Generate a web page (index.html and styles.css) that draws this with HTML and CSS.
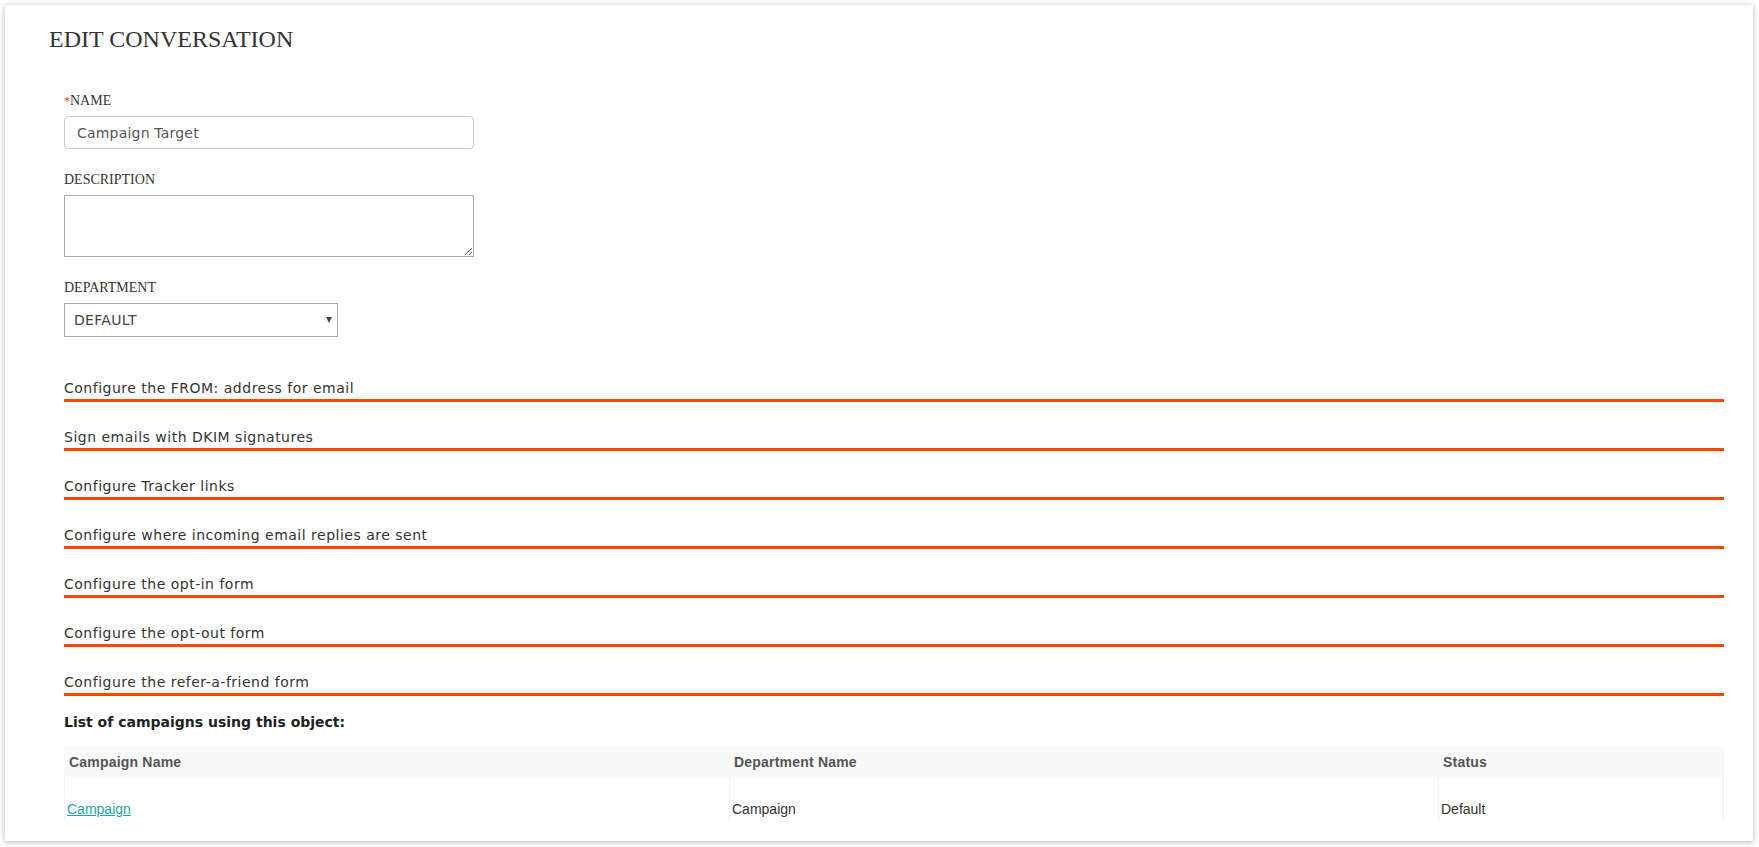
FILE: index.html
```html
<!DOCTYPE html>
<html lang="en">
<head>
    <meta charset="UTF-8">
    <meta name="viewport" content="width=device-width, initial-scale=1.0">
    <link rel="stylesheet" href="styles.css">
    <title>Edit conversation</title>
</head>
<body>
    <div class="card">

        <h1 class="title">EDIT CONVERSATION</h1>

        <div class="form">
            <div class="field">
                <label class="label" for="name"><span class="req">*</span>NAME</label>
                <input class="input" id="name" type="text" value="Campaign Target">
            </div>

            <div class="field">
                <label class="label" for="desc">DESCRIPTION</label>
                <textarea class="area" id="desc"></textarea>
            </div>

            <div class="field field-last">
                <label class="label" for="dept">DEPARTMENT</label>
                <div class="select-wrap">
                    <select class="select" id="dept">
                        <option>DEFAULT</option>
                    </select>
                </div>
            </div>

            <div class="sections">
                <div class="section">Configure the FROM: address for email</div>
                <div class="section">Sign emails with DKIM signatures</div>
                <div class="section">Configure Tracker links</div>
                <div class="section">Configure where incoming email replies are sent</div>
                <div class="section">Configure the opt-in form</div>
                <div class="section">Configure the opt-out form</div>
                <div class="section">Configure the refer-a-friend form</div>
            </div>

            <h3 class="list-title">List of campaigns using this object:</h3>

            <table class="campaigns">
                <colgroup>
                    <col class="c1">
                    <col class="c2">
                    <col class="c3">
                </colgroup>
                <thead>
                    <tr>
                        <th>Campaign Name</th>
                        <th>Department Name</th>
                        <th>Status</th>
                    </tr>
                </thead>
                <tbody>
                    <tr>
                        <td><a href="#">Campaign</a></td>
                        <td>Campaign</td>
                        <td>Default</td>
                    </tr>
                </tbody>
            </table>
        </div>
    </div>
</body>
</html>
```

FILE: styles.css
```css
*{
    margin:0;
    padding:0;
    box-sizing:border-box;
}
body{
    width:1759px;
    height:847px;
    overflow:hidden;
    background:#fff;
}
.card{
    margin:5px 6px 5px 5px;
    padding:19px 29px 20px 44px;

    background:#fff;
    box-shadow:0 1px 6px rgba(0,0,0,0.3);
}
.title{
    font-family:"Liberation Serif", "Times New Roman", serif;
    font-size:24px;
    font-weight:normal;
    line-height:30px;
    color:#333;
}
.form{
    padding-left:15px;
    margin-top:37px;
}
.field{
    margin-bottom:21px;
}
.field-last{
    margin-bottom:16px;
}
.label{
    display:block;
    margin-bottom:5px;

    font-family:"Liberation Serif", "Times New Roman", serif;
    font-size:14px;
    line-height:20px;
    color:#333;
}
.req{
    color:#e53935;
    font-size:12px;
}
.input{
    display:block;
    width:410px;
    height:33px;
    padding:0 12px;

    border:1px solid #ccc;
    border-radius:4px;
    outline:none;

    font-family:"DejaVu Sans", Verdana, sans-serif;
    font-size:14px;
    letter-spacing:0.2px;
    color:#555;
}
.area{
    display:block;
    width:410px;
    height:62px;

    border:1px solid #a9a9a9;
    outline:none;
}
.select-wrap{
    position:relative;
    width:274px;
}
.select-wrap::after{
    content:"";
    position:absolute;
    right:6px;
    top:14px;

    border-left:3px solid transparent;
    border-right:3px solid transparent;
    border-top:6px solid #444;
}
.select{
    display:block;
    width:274px;
    height:34px;
    padding:0 9px;

    border:1px solid #aaa;
    border-radius:0;
    background:#fff;
    -webkit-appearance:none;
    appearance:none;
    outline:none;

    font-family:"DejaVu Sans", Verdana, sans-serif;
    font-size:14px;
    letter-spacing:0.3px;
    color:#444;
}
.sections{
    display:flow-root;
}
.section{
    margin-top:25px;
    padding-bottom:1px;

    border-bottom:3px solid #ff4500;

    font-family:"DejaVu Sans", Verdana, sans-serif;
    font-size:14px;
    line-height:20px;
    letter-spacing:0.5px;
    color:#333;
}
.list-title{
    margin-top:16px;

    font-family:"DejaVu Sans", Verdana, sans-serif;
    font-size:14px;
    font-weight:bold;
    line-height:20px;
    color:#222;
}
.campaigns{
    width:1660px;
    margin-top:15px;

    table-layout:fixed;
    border-collapse:separate;
    border-spacing:0;

    font-family:"Liberation Sans", Arial, sans-serif;
    font-size:14px;
}
.c1{
    width:665px;
}
.c2{
    width:709px;
}
.campaigns thead{
    background:#f9f9f9;
}
.campaigns th{
    height:30px;
    padding:0 5px;

    text-align:left;
    font-size:14px;
    letter-spacing:0.2px;
    color:#555;
}
.campaigns td{
    height:44px;
    padding:0 2px 4px;
    vertical-align:bottom;

    border-left:1px solid #f0f0f0;

    line-height:16px;
    color:#333;
}
.campaigns td:last-child{
    border-right:1px solid #f0f0f0;
}
.campaigns a{
    color:#1fa4a6;
}
```
